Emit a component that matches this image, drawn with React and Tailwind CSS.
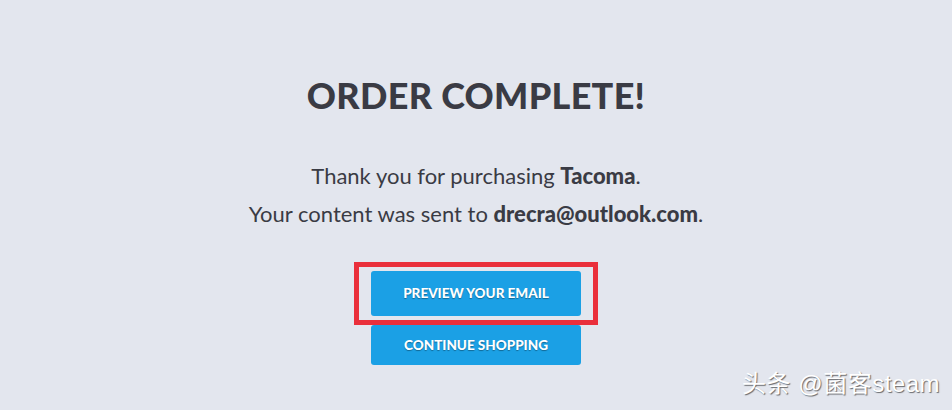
export default function App() {
  return (
    <div
      className="relative w-[952px] h-[410px] overflow-hidden bg-[#e3e6ee] text-[#3a3b44]"
      style={{ fontFamily: "Lato, 'Noto Sans', sans-serif" }}
    >
      <div className="flex flex-col items-center pt-[72px]">
        <h1 className="text-[36px] leading-[46px] font-black tracking-[0.3px]">ORDER COMPLETE!</h1>
        <p className="mt-[44px] text-[22px] leading-[28px]">
          Thank you for purchasing <b className="font-black">Tacoma</b>.
        </p>
        <p className="mt-[10px] text-[22px] leading-[28px]">
          Your content was sent to <b className="font-black">drecra@outlook.com</b>.
        </p>

        <div className="mt-[34px] border-[5px] border-[#ea2f3b] px-[12px] py-[4px]">
          <button className="flex w-[210px] h-[45px] items-center justify-center rounded-[3px] bg-[#1ba0e5] text-[13.5px] font-black text-white [text-shadow:0_1px_1px_rgba(0,0,0,0.35)]">
            PREVIEW YOUR EMAIL
          </button>
        </div>
        <button className="flex w-[210px] h-[40px] items-center justify-center rounded-[3px] bg-[#1ba0e5] text-[13.5px] font-black text-white [text-shadow:0_1px_1px_rgba(0,0,0,0.35)]">
          CONTINUE SHOPPING
        </button>
      </div>

      <div
        className="absolute right-[12px] bottom-[10px] text-[24px] leading-[32px] tracking-[0.5px] text-white [text-shadow:1px_1px_1px_rgba(0,0,0,0.55)]"
        style={{ fontFamily: "'Liberation Sans', 'Noto Sans CJK SC', sans-serif" }}
      >
        头条 @菌客steam
      </div>
    </div>
  );
}
